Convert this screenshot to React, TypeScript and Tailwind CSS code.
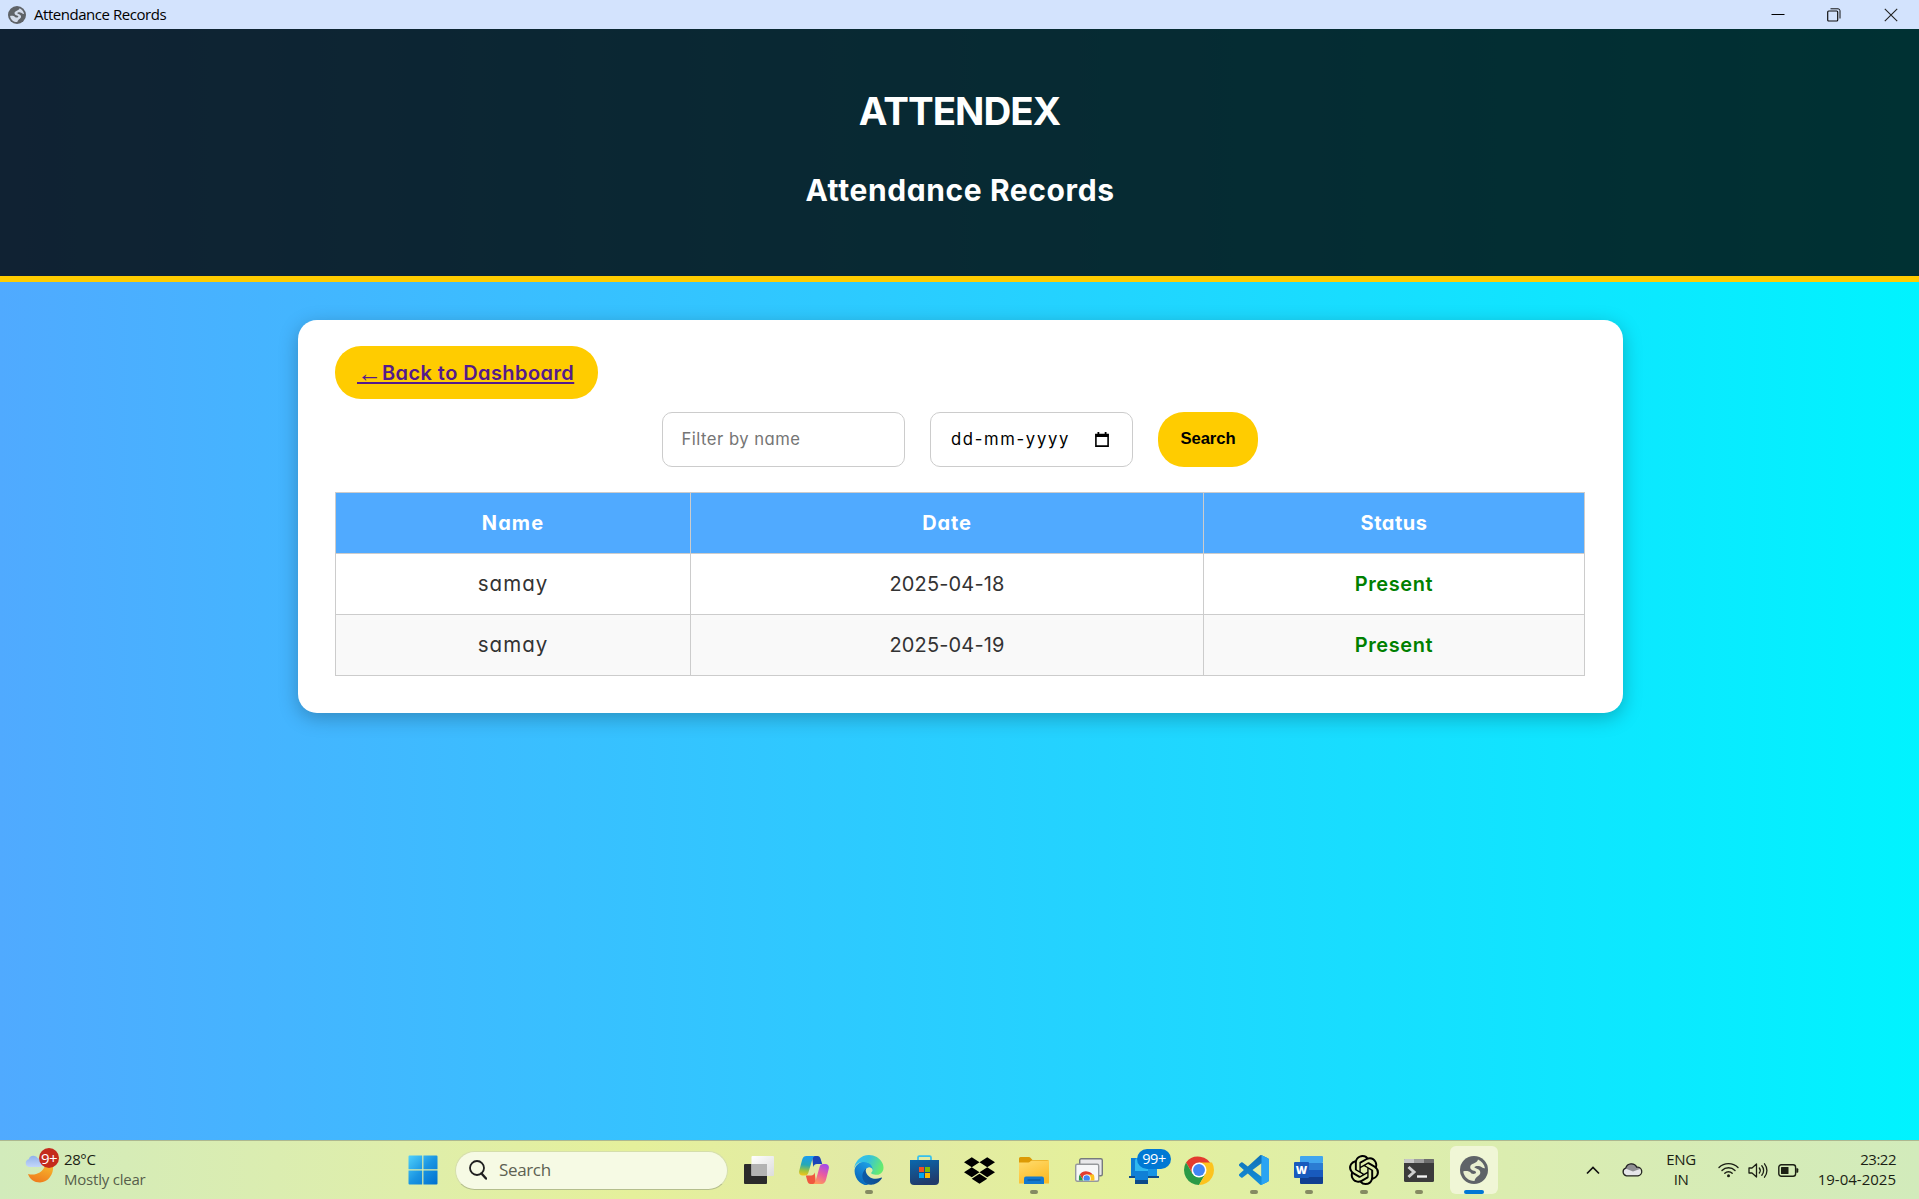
import type { ReactNode } from "react";
import { FaDropbox } from "react-icons/fa";
import { SiOpenai } from "react-icons/si";

function Globe({ size, land }: { size: number; land: string }) {
  return (
    <svg width={size} height={size} viewBox="0 0 28 28">
      <circle cx="14" cy="14" r="14" fill="#5f6368" />
      <path d="M18 3.500C21.500 5 24.300 8.300 25 12.300C22.500 12.600 21.500 10.500 19 10C16.500 9.600 14.500 10.200 14.500 11.300C14.500 12.800 20.500 12.400 20.300 16.800C20.100 20.300 15.800 20 14.500 25C9 25.200 4 21.300 3.200 15.500C6 14.600 9.500 15.200 11 17C12.200 18.500 16.300 18 16 16.200C15.700 14.300 10.200 15 10.200 11.300C10.200 6.800 17 8 18 3.500z" fill={land} />
    </svg>
  );
}

function TaskIcon({ running, children }: { running?: boolean; children: ReactNode }) {
  return (
    <div className="relative flex h-full w-[55px] shrink-0 items-center justify-center">
      {children}
      {running && <span className="absolute bottom-[5px] left-[23.500px] h-1 w-2 rounded-full bg-[#858a62]" />}
    </div>
  );
}

function StartLogo() {
  return (
    <svg width="30" height="30" viewBox="0 0 30 30">
      <defs>
        <linearGradient id="win" x1="0" y1="0" x2="1" y2="1">
          <stop offset="0" stopColor="#4fd0fb" />
          <stop offset="0.5" stopColor="#1a95e2" />
          <stop offset="1" stopColor="#0070cf" />
        </linearGradient>
      </defs>
      <path d="M1.500.5H14.200V14.200H.5V1.500a1 1 0 0 1 1-1zM15.400.5H28.500a1 1 0 0 1 1 1V14.200H15.400zM.5 15.400H14.200V29.500H1.500a1 1 0 0 1-1-1zM15.400 15.400H29.500V28.500a1 1 0 0 1-1 1H15.400z" fill="url(#win)" />
    </svg>
  );
}

function TaskView() {
  return (
    <svg width="30" height="28" viewBox="0 0 30 28">
      <defs>
        <linearGradient id="tv" x1="0" y1="0" x2="1" y2="1">
          <stop offset="0" stopColor="#fff" />
          <stop offset="1" stopColor="#dcdcdc" />
        </linearGradient>
      </defs>
      <rect x="0" y="8" width="23" height="20" rx="1" fill="#2b2b2b" />
      <rect x="7.500" y="0" width="22.500" height="20" rx="1" fill="url(#tv)" />
      <rect x="7.500" y="8" width="15.500" height="12" fill="#b3b3b3" />
    </svg>
  );
}

function Copilot() {
  return (
    <svg width="30" height="28" viewBox="0 0 30 28">
      <defs>
        <linearGradient id="cpA" x1="0.400" y1="0" x2="0.300" y2="1">
          <stop offset="0" stopColor="#1a9cf0" />
          <stop offset="0.450" stopColor="#27a9b5" />
          <stop offset="0.750" stopColor="#9fc33c" />
          <stop offset="1" stopColor="#f5c518" />
        </linearGradient>
        <linearGradient id="cpB" x1="0.700" y1="0" x2="0.300" y2="1">
          <stop offset="0" stopColor="#a34bea" />
          <stop offset="0.500" stopColor="#ea5ba0" />
          <stop offset="1" stopColor="#ff9a5a" />
        </linearGradient>
      </defs>
      <path d="M13 0h5.500c1.700 0 2.600 1.200 3.100 2.800l1.600 5.200h-5.400c-1.800 0-2.900 1-3.500 3z" fill="#1b44b8" />
      <path d="M17 28h-5.500c-1.700 0-2.600-1.200-3.100-2.800L6.800 19.500h5.400c1.800 0 2.900-1 3.500-3z" fill="#f0583f" />
      <path d="M7.500 0h8.300c-1.500.7-2.100 2.200-2.700 4.200l-3.600 12c-.6 2.300-1.700 3.300-3.700 3.300H3.500C.9 19.500-.5 17.500.3 14.400L3 4.200C3.700 1.500 5 0 7.500 0z" fill="url(#cpA)" />
      <path d="M22.500 28h-8.300c1.500-.7 2.100-2.200 2.700-4.200l3.600-12.500c.6-2.300 1.700-3.300 3.700-3.300h2.300c2.600 0 4 2 3.200 5.100L27 23.800c-.7 2.700-2 4.200-4.500 4.200z" fill="url(#cpB)" />
    </svg>
  );
}

function Edge() {
  return (
    <svg width="30" height="30" viewBox="0 0 258 260">
      <defs>
        <linearGradient id="edA" x1="0.250" y1="0.500" x2="1" y2="0.500">
          <stop offset="0" stopColor="#0c59a4" />
          <stop offset="1" stopColor="#114a8b" />
        </linearGradient>
        <linearGradient id="edB" x1="0.700" y1="0.100" x2="0.200" y2="0.900">
          <stop offset="0" stopColor="#1b9de2" />
          <stop offset="0.500" stopColor="#1380d0" />
          <stop offset="1" stopColor="#0667b8" />
        </linearGradient>
        <linearGradient id="edC" x1="0.050" y1="0.300" x2="0.950" y2="0.600">
          <stop offset="0" stopColor="#35c1f1" />
          <stop offset="0.400" stopColor="#34c1dd" />
          <stop offset="1" stopColor="#66eb6e" />
        </linearGradient>
      </defs>
      <path fill="url(#edA)" d="M235.680 195.460a93.730 93.730 0 0 1-10.540 4.710 101.870 101.870 0 0 1-35.900 6.460c-47.320 0-88.540-32.550-88.540-74.320a31.480 31.480 0 0 1 16.430-27.310c-42.800 1.800-53.800 46.400-53.800 72.530 0 73.880 68.090 81.370 82.760 81.370 7.910 0 19.840-2.300 27-4.560l1.310-.44a128.340 128.340 0 0 0 66.600-52.800 4 4 0 0 0-5.320-5.640Z" />
      <path fill="url(#edB)" d="M109.600 251.800a79.200 79.200 0 0 1-22.740-21.340 80.720 80.720 0 0 1 29.530-120c3.120-1.470 8.450-4.130 15.540-4a32.350 32.350 0 0 1 25.690 13 31.880 31.880 0 0 1 6.360 18.660c0-.21 24.460-79.600-80-79.600-43.900 0-80 41.660-80 78.210a130.150 130.150 0 0 0 12.110 56 128 128 0 0 0 156.380 67.110 75.550 75.550 0 0 1-62.780-8Z" />
      <path fill="url(#edC)" d="M151.110 150.560c-.81 1.050-3.300 2.500-3.300 5.660 0 2.610 1.700 5.120 4.720 7.230 14.380 10 41.490 8.680 41.560 8.680a59.560 59.560 0 0 0 30.270-8.350 61.380 61.380 0 0 0 30.430-52.880c.26-22.410-8-37.310-11.340-43.910C222.250 25.490 177.280 0 128.360 0a128 128 0 0 0-128 126.200c.48-36.540 36.800-66.050 80-66.050 3.500 0 23.460.34 42 10.070 16.340 8.580 24.900 18.940 30.850 29.210 6.180 10.670 7.280 24.150 7.280 29.520 0 5.370-2.740 13.330-9.380 21.610z" />
    </svg>
  );
}

function Store() {
  return (
    <svg width="29" height="30" viewBox="0 0 29 30">
      <defs>
        <linearGradient id="st" x1="0" y1="0" x2="0.300" y2="1">
          <stop offset="0" stopColor="#0a68ae" />
          <stop offset="1" stopColor="#203b6b" />
        </linearGradient>
      </defs>
      <path d="M8 6V2.500A1.300 1.300 0 0 1 9.300 1.200H19.700A1.300 1.300 0 0 1 21 2.500V6" fill="none" stroke="#35c0ee" strokeWidth="1.700" />
      <path d="M0 5H29V26a4 4 0 0 1-4 4H4a4 4 0 0 1-4-4z" fill="url(#st)" />
      <rect x="9" y="12" width="5" height="5" fill="#f25022" />
      <rect x="15" y="12" width="5" height="5" fill="#7fba00" />
      <rect x="9" y="18" width="5" height="5" fill="#00a4ef" />
      <rect x="15" y="18" width="5" height="5" fill="#ffb900" />
    </svg>
  );
}

function Folder() {
  return (
    <svg width="30" height="27" viewBox="0 0 30 27">
      <defs>
        <linearGradient id="fo" x1="0" y1="0" x2="0.500" y2="1">
          <stop offset="0" stopColor="#ffdc6e" />
          <stop offset="1" stopColor="#fcbc28" />
        </linearGradient>
      </defs>
      <path d="M0 1.500A1.500 1.500 0 0 1 1.500 0H9.500c1 0 1.500.3 2.200 1L13.500 3H28a2 2 0 0 1 2 2v5H0z" fill="#dc9a05" />
      <path d="M0 5.500H9c1 0 1.500-.3 2.200-1S12.500 3.500 13.500 3.500H30V26.500H0z" fill="url(#fo)" />
      <path d="M5 27V21.500a2 2 0 0 1 2-2H23a2 2 0 0 1 2 2V27z" fill="#1379cf" />
      <path d="M8.500 23H21.500" stroke="#0b559c" strokeWidth="1.200" />
    </svg>
  );
}

function ChromeMark() {
  return (
    <>
      <path d="M24 12L34.390 18H44.780A24 24 0 0 0 3.220 12L13.610 30L24 24z" fill="#e33b2e" />
      <path d="M3.220 12A24 24 0 0 0 24 48L34.390 30L24 24L13.610 30z" fill="#2a9a46" />
      <path d="M24 12H44.780A24 24 0 0 1 24 48L34.390 30z" fill="#fcc31e" />
      <circle cx="24" cy="24" r="12" fill="#fff" />
      <circle cx="24" cy="24" r="9.500" fill="#4285f4" />
    </>
  );
}

function RemoteDesktop() {
  return (
    <svg width="28" height="24" viewBox="0 0 28 24">
      <rect x="4.700" y="0.700" width="22.600" height="17" rx="1.500" fill="#e8e8ea" stroke="#777a7d" strokeWidth="1.400" />
      <rect x="0.700" y="6.200" width="23" height="17" rx="1.500" fill="#f6f7f8" stroke="#96999c" strokeWidth="1.400" />
      <svg x="3.700" y="12.500" width="16" height="10" viewBox="0 0 48 30">
        <ChromeMark />
      </svg>
    </svg>
  );
}

function PhoneLink() {
  return (
    <svg width="30" height="27" viewBox="0 0 30 27">
      <path d="M2 1H20V19H2z" fill="#0f7fd4" />
      <path d="M0 19H30V21H0z" fill="#0d4d8c" />
      <path d="M6 4a3 3 0 0 1 3-3H19V27H6z" fill="#2fb8f0" />
      <path d="M19 10H28V19H19z" fill="#1795e4" />
      <path d="M6 14H19V24H6z" fill="#0f80d6" />
      <path d="M6 23H19V27H6z" fill="#0c4a89" />
    </svg>
  );
}

function Word() {
  return (
    <svg width="30" height="28" viewBox="0 0 30 28">
      <rect x="6" y="0" width="23" height="7" rx="1" fill="#41a5ee" />
      <rect x="6" y="7" width="23" height="7" fill="#2b7cd3" />
      <rect x="6" y="14" width="23" height="7" fill="#185abd" />
      <path d="M6 21H29V27a1 1 0 0 1-1 1H7a1 1 0 0 1-1-1z" fill="#103f91" />
      <rect x="0" y="6" width="15" height="16" rx="1" fill="#185abd" />
      <text x="7.500" y="18" textAnchor="middle" fontFamily="Open Sans, sans-serif" fontWeight="800" fontSize="11" fill="#fff">
        W
      </text>
    </svg>
  );
}

function Terminal() {
  return (
    <svg width="30" height="23" viewBox="0 0 30 23">
      <rect width="30" height="23" rx="1.500" fill="#3b3b3b" />
      <path d="M1 0H20V4H0V1A1 1 0 0 1 1 0z" fill="#c6c6c6" />
      <path d="M10 0H20V4H10z" fill="#9d9d9d" />
      <path d="M20 0H29A1 1 0 0 1 30 1V4H20z" fill="#6c6c6c" />
      <path d="M4.500 8L10 13L4.500 18" fill="none" stroke="#cfcfcf" strokeWidth="3" />
      <path d="M13 17.500H23" stroke="#f3f3f3" strokeWidth="2.400" />
    </svg>
  );
}

function VSCode() {
  return (
    <svg width="30" height="30" viewBox="0 0 24 24">
      <defs>
        <linearGradient id="vs" x1="0" y1="0" x2="0" y2="1">
          <stop offset="0" stopColor="#0f6fb5" />
          <stop offset="1" stopColor="#1590dc" />
        </linearGradient>
      </defs>
      <path
        fill="url(#vs)"
        d="M23.150 2.587L18.210.21a1.494 1.494 0 0 0-1.705.29l-9.460 8.630-4.120-3.128a.999.999 0 0 0-1.276.057L.327 7.261A1 1 0 0 0 .326 8.740L3.899 12 .326 15.260a1 1 0 0 0 .001 1.479L1.650 17.940a.999.999 0 0 0 1.276.057l4.120-3.128 9.460 8.630a1.492 1.492 0 0 0 1.704.29l4.942-2.377A1.500 1.500 0 0 0 24 20.060V3.939a1.500 1.500 0 0 0-.85-1.352zm-5.146 14.861L10.826 12l7.178-5.448v10.896z"
      />
      <path fill="#2aa4f3" d="M18.004.15L23.150 2.587A1.500 1.500 0 0 1 24 3.939V20.060A1.500 1.500 0 0 1 23.150 21.410L18.004 23.850z" />
    </svg>
  );
}

function Weather() {
  return (
    <svg width="30" height="28" viewBox="0 0 30 28">
      <defs>
        <linearGradient id="moon" x1="0.800" y1="0" x2="0.300" y2="1">
          <stop offset="0" stopColor="#f6b32c" />
          <stop offset="1" stopColor="#ef7a1c" />
        </linearGradient>
        <linearGradient id="cl" x1="0" y1="0" x2="0" y2="1">
          <stop offset="0" stopColor="#8fb1ea" />
          <stop offset="1" stopColor="#c3d6fa" />
        </linearGradient>
      </defs>
      <path d="M3 19c7 2 14-1 17-8h8c1 8-5 16.500-13 16.500C9.500 27.500 4.500 24 3 19z" fill="url(#moon)" />
      <path d="M4 12a4 4 0 0 1-.3-7.800A5 5 0 0 1 13 3.500 4.300 4.300 0 0 1 17.500 8c0 2.500-1.500 4-3.500 4z" fill="url(#cl)" />
    </svg>
  );
}

const records = [
  { name: "samay", date: "2025-04-18", status: "Present" },
  { name: "samay", date: "2025-04-19", status: "Present" },
];

function TitleBar() {
  return (
    <div className="flex h-[29px] shrink-0 items-center bg-[#d3e3fd] pl-2 text-black">
      <Globe size={18} land="#d3dbea" />
      <span className="ml-2 font-['Open_Sans'] text-[15px] leading-[29px] tracking-[-0.46px]">Attendance Records</span>
      <svg className="mr-[42px] ml-auto" width="14" height="14" viewBox="0 0 14 14">
        <path d="M0.500 6.500H13.500" stroke="#000" />
      </svg>
      <svg className="mr-[43px]" width="14" height="14" viewBox="0 0 14 14" fill="none" stroke="#111">
        <rect x="0.700" y="3" width="10" height="10" rx="1" strokeWidth="1.200" />
        <path d="M3.500 0.800H11a2 2 0 0 1 2 2V10.500" />
      </svg>
      <svg className="mr-[21px]" width="14" height="14" viewBox="0 0 14 14">
        <path d="M0.800 0.800L13.200 13.200M13.200 0.800L0.800 13.200" stroke="#222" strokeWidth="1.100" />
      </svg>
    </div>
  );
}

function RecordsPage() {
  return (
    <main className="flex min-h-0 flex-1 flex-col bg-[linear-gradient(to_right,#50aaff,#00f3ff)] font-[Inter] [font-feature-settings:'cv11']">
      <header className="h-[253px] shrink-0 border-b-[6px] border-[#ffcc00] bg-black/80 bg-clip-padding pt-[57px] text-center font-bold text-white">
        <h1 className="text-[38.5px] leading-[50px] tracking-[-0.95px]">ATTENDEX</h1>
        <h2 className="mt-[34px] pl-[1px] text-[30px] leading-10 tracking-[0.6px]">Attendance Records</h2>
      </header>

      <section className="mt-[38px] ml-[298px] h-[393px] w-[1325px] shrink-0 rounded-[19px] bg-white px-[37px] pt-[26px] shadow-[0_5px_19px_rgba(0,0,0,0.25)]">
        <a className="flex h-[53px] w-[263px] items-center rounded-[26px] bg-[#ffcc00] pl-[22px] text-xl font-semibold text-[#551a8b]">
          <span className="whitespace-nowrap underline decoration-2 underline-offset-2 [text-decoration-skip-ink:none]">
            <span className="align-[-2px] font-['Liberation_Sans'] text-[25px] leading-none font-normal">←</span>
            <span className="tracking-[0.42px]">Back to Dashboard</span>
          </span>
        </a>

        <div className="mt-[13px] ml-[327px] flex h-[55px] gap-[25px]">
          <div className="flex w-[243px] items-center rounded-[10px] border border-[#ccc] pl-[18.5px] text-[16.67px] tracking-[0.47px] text-[#757575]">
            Filter by name
          </div>
          <div className="flex w-[203px] items-center justify-between rounded-[10px] border border-[#ccc] pr-[23px] pl-5 text-[16.67px] tracking-[1.66px] text-black">
            dd-mm-yyyy
            <svg width="14" height="15" viewBox="0 0 14 15">
              <path d="M0.900 2.500H13.100V14.100H0.900z" fill="none" stroke="#000" strokeWidth="1.600" />
              <path d="M0.500 2H13.500V5H0.500zM2.500 0H4.300V3H2.500zM9.700 0H11.500V3H9.700z" fill="#000" />
            </svg>
          </div>
          <button className="w-[100px] rounded-[26px] bg-[#ffcc00] pb-[3px] font-['Liberation_Sans'] text-[16.67px] font-bold tracking-[-0.1px] text-black">
            Search
          </button>
        </div>

        <table className="mt-[25px] w-[1250px] table-fixed border-separate border-spacing-0 border-t border-l border-[#ccc] text-center text-xl">
          <thead>
            <tr className="h-[61px] bg-[#50aaff] text-white">
              <th className="w-[355px] border-r border-b border-[#ccc] font-bold tracking-[1.1px]">Name</th>
              <th className="w-[513px] border-r border-b border-[#ccc] font-bold tracking-[0.9px]">Date</th>
              <th className="w-[381px] border-r border-b border-[#ccc] font-bold tracking-[0.5px]">Status</th>
            </tr>
          </thead>
          <tbody>
            {records.map((r) => (
              <tr key={r.date} className="h-[61px] text-[#333] even:bg-[#f9f9f9]">
                <td className="border-r border-b border-[#ccc] text-[20.5px] tracking-[1px]">{r.name}</td>
                <td className="border-r border-b border-[#ccc] tracking-[0.15px]">{r.date}</td>
                <td className="border-r border-b border-[#ccc] font-semibold tracking-[0.58px] text-[#008000]">{r.status}</td>
              </tr>
            ))}
          </tbody>
        </table>
      </section>
    </main>
  );
}

function Taskbar() {
  return (
    <footer className="flex h-[59px] shrink-0 items-center border-t border-[#adb890] bg-[linear-gradient(to_right,#d2ebbb,#dfeeab_21%,#e5f09b_33%,#e2eaa6_45%,#e4f09b_57%,#deeeab_72%,#d8ecb4_85%,#d2ebbb)] font-['Open_Sans'] text-[15px] text-[#1b1f14]">
      <div className="relative ml-[25px] flex h-full w-[380px] shrink-0 items-center">
        <div className="-mt-[2px]">
          <Weather />
        </div>
        <span className="absolute top-[7px] left-[14px] flex size-5 items-center justify-center rounded-full bg-[#c42b1c] text-[15px] tracking-[-0.5px] text-white">
          9+
        </span>
        <div className="mb-[3px] ml-[9px] leading-5">
          <div className="tracking-[-0.4px]">28°C</div>
          <div className="tracking-[-0.22px] text-[#575e4b]">Mostly clear</div>
        </div>
      </div>
      <div className="flex w-[50px] shrink-0 pl-[2.5px]">
        <StartLogo />
      </div>
      <div className="flex h-[39px] w-[273px] shrink-0 items-center rounded-full border border-[#d5deab] border-b-[#b4be8c] bg-[#f6fae4] pl-[13px]">
        <svg width="18" height="20" viewBox="0 0 18 20" fill="none" stroke="#1f1f1f">
          <circle cx="8" cy="8" r="7" strokeWidth="1.800" />
          <path d="M12.500 13.500L17 18.500" strokeWidth="2.400" strokeLinecap="round" />
        </svg>
        <span className="ml-3 text-[17px] tracking-[-0.35px] text-[#5d6152]">Search</span>
      </div>
      <div className="ml-[3.5px] flex h-full">
        <TaskIcon><TaskView /></TaskIcon>
        <TaskIcon><Copilot /></TaskIcon>
        <TaskIcon running><Edge /></TaskIcon>
        <TaskIcon><Store /></TaskIcon>
        <TaskIcon><FaDropbox size={31} color="#000" /></TaskIcon>
        <TaskIcon running><Folder /></TaskIcon>
        <TaskIcon><RemoteDesktop /></TaskIcon>
        <TaskIcon>
          <PhoneLink />
          <span className="absolute top-2 left-[20.5px] flex h-5 w-[34px] items-center justify-center rounded-full bg-[#0078d4] text-[14.5px] tracking-[-0.4px] text-white">
            99+
          </span>
        </TaskIcon>
        <TaskIcon>
          <svg width="30" height="30" viewBox="0 0 48 48"><ChromeMark /></svg>
        </TaskIcon>
        <TaskIcon running><VSCode /></TaskIcon>
        <TaskIcon running><Word /></TaskIcon>
        <TaskIcon running><SiOpenai size={30} color="#000" /></TaskIcon>
        <TaskIcon running><Terminal /></TaskIcon>
        <div className="relative flex h-full w-[55px] items-center justify-center">
          <div className="flex size-12 items-center justify-center rounded-md bg-[#f0f6d6]">
            <Globe size={28} land="#e9efd0" />
          </div>
          <span className="absolute bottom-[5px] left-[17.5px] h-1 w-5 rounded-full bg-[#0078d4]" />
        </div>
      </div>
      <div className="mr-[23px] ml-auto flex h-full items-center">
        <svg width="14" height="9" viewBox="0 0 14 9" fill="none" stroke="#111" strokeWidth="1.700">
          <path d="M1 7.500L7 1.500L13 7.500" />
        </svg>
        <svg className="mb-[2px] ml-[22px]" width="21" height="15" viewBox="0 0 21 15">
          <path d="M4.500 13.500a4 4 0 0 1-.8-7.500A6 6 0 0 1 14.800 5.200a4.300 4.300 0 0 1 1.200 8.300z" fill="#e6e6ea" />
          <path d="M3.500 6.500A6 6 0 0 1 14.800 5.200c1.500 0 2.700.5 3.700 1.500L11 9.500z" fill="#8f8f93" />
          <path d="M4.500 13.800a4 4 0 0 1-.8-7.700A6 6 0 0 1 14.800 5.200a4.300 4.300 0 0 1 1.200 8.600z" fill="none" stroke="#222" strokeWidth="1.300" />
        </svg>
        <div className="mb-[2px] ml-[23px] w-[30px] text-center leading-5 tracking-[-0.4px]">
          <div>ENG</div>
          <div>IN</div>
        </div>
        <svg className="mb-[1px] ml-[22px]" width="21" height="16" viewBox="0 0 21 16" fill="none" stroke="#1b1f14" strokeWidth="1.400" strokeLinecap="round">
          <path d="M1 5.500a13.500 13.500 0 0 1 19 0M4 8.500a9.200 9.200 0 0 1 13 0M6.800 11.200a5.300 5.300 0 0 1 7.400 0" />
          <circle cx="10.500" cy="13.800" r="1.500" fill="#1b1f14" stroke="none" />
        </svg>
        <svg className="ml-[9px]" width="21" height="17" viewBox="0 0 21 17" fill="none" stroke="#1b1f14" strokeWidth="1.300" strokeLinecap="round" strokeLinejoin="round">
          <path d="M1 6H4L8.500 2V15L4 11H1z" />
          <path d="M11.300 6a4 4 0 0 1 0 5M13.800 3.800a7 7 0 0 1 0 9.400M16.500 1.800a10.500 10.500 0 0 1 0 13.400" />
        </svg>
        <svg className="ml-[9px]" width="21" height="13" viewBox="0 0 21 13">
          <rect x="0.800" y="0.800" width="16.800" height="11.400" rx="2.500" fill="none" stroke="#1b1f14" strokeWidth="1.400" />
          <rect x="3" y="3" width="7.500" height="7" rx="0.500" fill="#1b1f14" />
          <path d="M18.300 4.300h1a1 1 0 0 1 1 1v2.400a1 1 0 0 1-1 1h-1z" fill="#1b1f14" />
        </svg>
        <div className="mb-[3px] w-[97px] text-right leading-5">
          <div className="tracking-[-0.5px]">23:22</div>
          <div>19-04-2025</div>
        </div>
      </div>
    </footer>
  );
}

export default function App() {
  return (
    <div className="flex h-[1199px] w-[1919px] flex-col overflow-hidden">
      <TitleBar />
      <RecordsPage />
      <Taskbar />
    </div>
  );
}
